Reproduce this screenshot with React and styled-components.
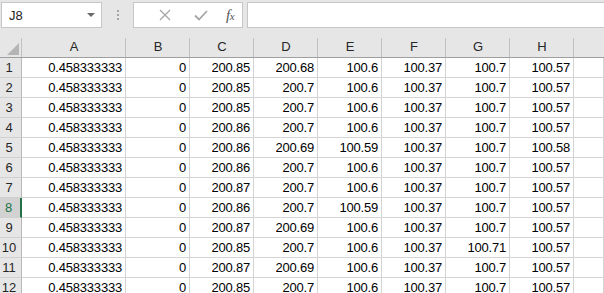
import React from "react"
import styled, { createGlobalStyle } from "styled-components"

const GlobalStyle = createGlobalStyle`
  html, body {
    margin: 0;
    padding: 0;
    background: #ffffff;
    overflow: hidden;
  }
  body {
    font-family: "Liberation Sans", Arial, sans-serif;
  }
`

const Sheet = styled.div`
  width: 604px;
  height: 293px;
  overflow: hidden;
  background: #ffffff;
`

const Toolbar = styled.div`
  display: flex;
  align-items: flex-start;
  height: 37px;
  padding-top: 2px;
  box-sizing: border-box;
  background: #e6e6e6;
`

const NameBox = styled.div`
  display: flex;
  align-items: center;
  justify-content: space-between;
  width: 101px;
  height: 26px;
  margin-left: 1px;
  padding: 0 6px 0 7px;
  box-sizing: border-box;
  background: #ffffff;
  border: 1px solid #c6c6c6;
  font-size: 13px;
  color: #222222;
`

const Caret = styled.span`
  width: 0;
  height: 0;
  border-left: 4px solid transparent;
  border-right: 4px solid transparent;
  border-top: 4px solid #6a6a6a;
`

const Grip = styled.div`
  display: flex;
  flex-direction: column;
  justify-content: center;
  gap: 2px;
  width: 31px;
  height: 26px;
  align-items: center;
`

const Dot = styled.span`
  width: 2px;
  height: 2px;
  background: #a6a6a6;
`

const ButtonBox = styled.div`
  display: flex;
  align-items: center;
  width: 110px;
  height: 26px;
  box-sizing: border-box;
  background: #ffffff;
  border: 1px solid #c6c6c6;
  padding-left: 13px;
`

const ToolIcon = styled.span`
  display: flex;
  align-items: center;
  justify-content: center;
  width: ${p => p.w}px;
  color: #a6a6a6;
`

const Fx = styled.span`
  font-family: "Liberation Serif", "Times New Roman", serif;
  font-style: italic;
  font-size: 15px;
  color: #555555;
  letter-spacing: -0.5px;
  & small {
    font-size: 11px;
  }
`

const FormulaInput = styled.div`
  flex: 1;
  height: 26px;
  margin-left: 4px;
  box-sizing: border-box;
  background: #ffffff;
  border: 1px solid #c6c6c6;
  border-right: none;
`

const Grid = styled.div`
  display: grid;
  grid-template-columns: 22px 104px repeat(7, 64px) 1fr;
  grid-template-rows: 21px;
  grid-auto-rows: 20px;
`

const HeadCell = styled.div`
  display: flex;
  align-items: flex-end;
  justify-content: center;
  padding-bottom: 3px;
  box-sizing: border-box;
  background: #e6e6e6;
  border-bottom: 1px solid #9f9f9f;
  font-size: 13px;
  color: #262626;
  position: relative;
  &::after {
    content: "";
    position: absolute;
    right: 0;
    top: 1px;
    bottom: 0;
    width: 1px;
    background: ${p => (p.last ? "transparent" : "#c0c0c0")};
  }
`

const Corner = styled(HeadCell)`
  justify-content: flex-end;
  padding: 0 3px 2px 0;
`

const RowHead = styled.div`
  display: flex;
  align-items: center;
  justify-content: center;
  padding-right: 3px;
  box-sizing: border-box;
  background: ${p => (p.active ? "#d2d2d2" : "#e6e6e6")};
  border-bottom: 1px solid #d0d0d0;
  border-right: ${p => (p.active ? "2px solid #217346" : "1px solid #b8b8b8")};
  font-size: 13px;
  color: ${p => (p.active ? "#217346" : "#262626")};
`

const Cell = styled.div`
  display: flex;
  align-items: center;
  justify-content: flex-end;
  padding-right: 3px;
  box-sizing: border-box;
  border-right: 1px solid #d4d4d4;
  border-bottom: 1px solid #d4d4d4;
  font-size: 13px;
  letter-spacing: -0.2px;
  color: #000000;
  white-space: nowrap;
`

const columns = ["A", "B", "C", "D", "E", "F", "G", "H", ""]

const rows = [
  ["200.85", "200.68", "100.6", "100.37", "100.7", "100.57"],
  ["200.85", "200.7", "100.6", "100.37", "100.7", "100.57"],
  ["200.85", "200.7", "100.6", "100.37", "100.7", "100.57"],
  ["200.86", "200.7", "100.6", "100.37", "100.7", "100.57"],
  ["200.86", "200.69", "100.59", "100.37", "100.7", "100.58"],
  ["200.86", "200.7", "100.6", "100.37", "100.7", "100.57"],
  ["200.87", "200.7", "100.6", "100.37", "100.7", "100.57"],
  ["200.86", "200.7", "100.59", "100.37", "100.7", "100.57"],
  ["200.87", "200.69", "100.6", "100.37", "100.7", "100.57"],
  ["200.85", "200.7", "100.6", "100.37", "100.71", "100.57"],
  ["200.87", "200.69", "100.6", "100.37", "100.7", "100.57"],
  ["200.85", "200.7", "100.6", "100.37", "100.7", "100.57"],
]

const App = () => (
  <Sheet>
    <GlobalStyle />
    <Toolbar>
      <NameBox>
        J8
        <Caret />
      </NameBox>
      <Grip>
        <Dot />
        <Dot />
        <Dot />
      </Grip>
      <ButtonBox>
        <ToolIcon w={36}>
          <svg width="12" height="12" viewBox="0 0 12 12">
            <path d="M1 1 L11 11 M11 1 L1 11" stroke="currentColor" strokeWidth="1.3" fill="none" />
          </svg>
        </ToolIcon>
        <ToolIcon w={36}>
          <svg width="14" height="11" viewBox="0 0 14 11">
            <path d="M1 5.5 L5 9.5 L13 1" stroke="currentColor" strokeWidth="1.8" fill="none" />
          </svg>
        </ToolIcon>
        <ToolIcon w={22}>
          <Fx>f<small>x</small></Fx>
        </ToolIcon>
      </ButtonBox>
      <FormulaInput />
    </Toolbar>
    <Grid>
      <Corner>
        <svg width="12" height="12" viewBox="0 0 12 12">
          <path d="M12 0 L12 12 L0 12 Z" fill="#b5b5b5" />
        </svg>
      </Corner>
      {columns.map((c, i) => (
        <HeadCell key={i} last={i === columns.length - 1}>{c}</HeadCell>
      ))}
      {rows.map((r, i) => (
        <React.Fragment key={i}>
          <RowHead active={i === 7}>{i + 1}</RowHead>
          <Cell>0.458333333</Cell>
          <Cell>0</Cell>
          {r.map((v, j) => (
            <Cell key={j}>{v}</Cell>
          ))}
          <Cell />
        </React.Fragment>
      ))}
    </Grid>
  </Sheet>
)

export default App
